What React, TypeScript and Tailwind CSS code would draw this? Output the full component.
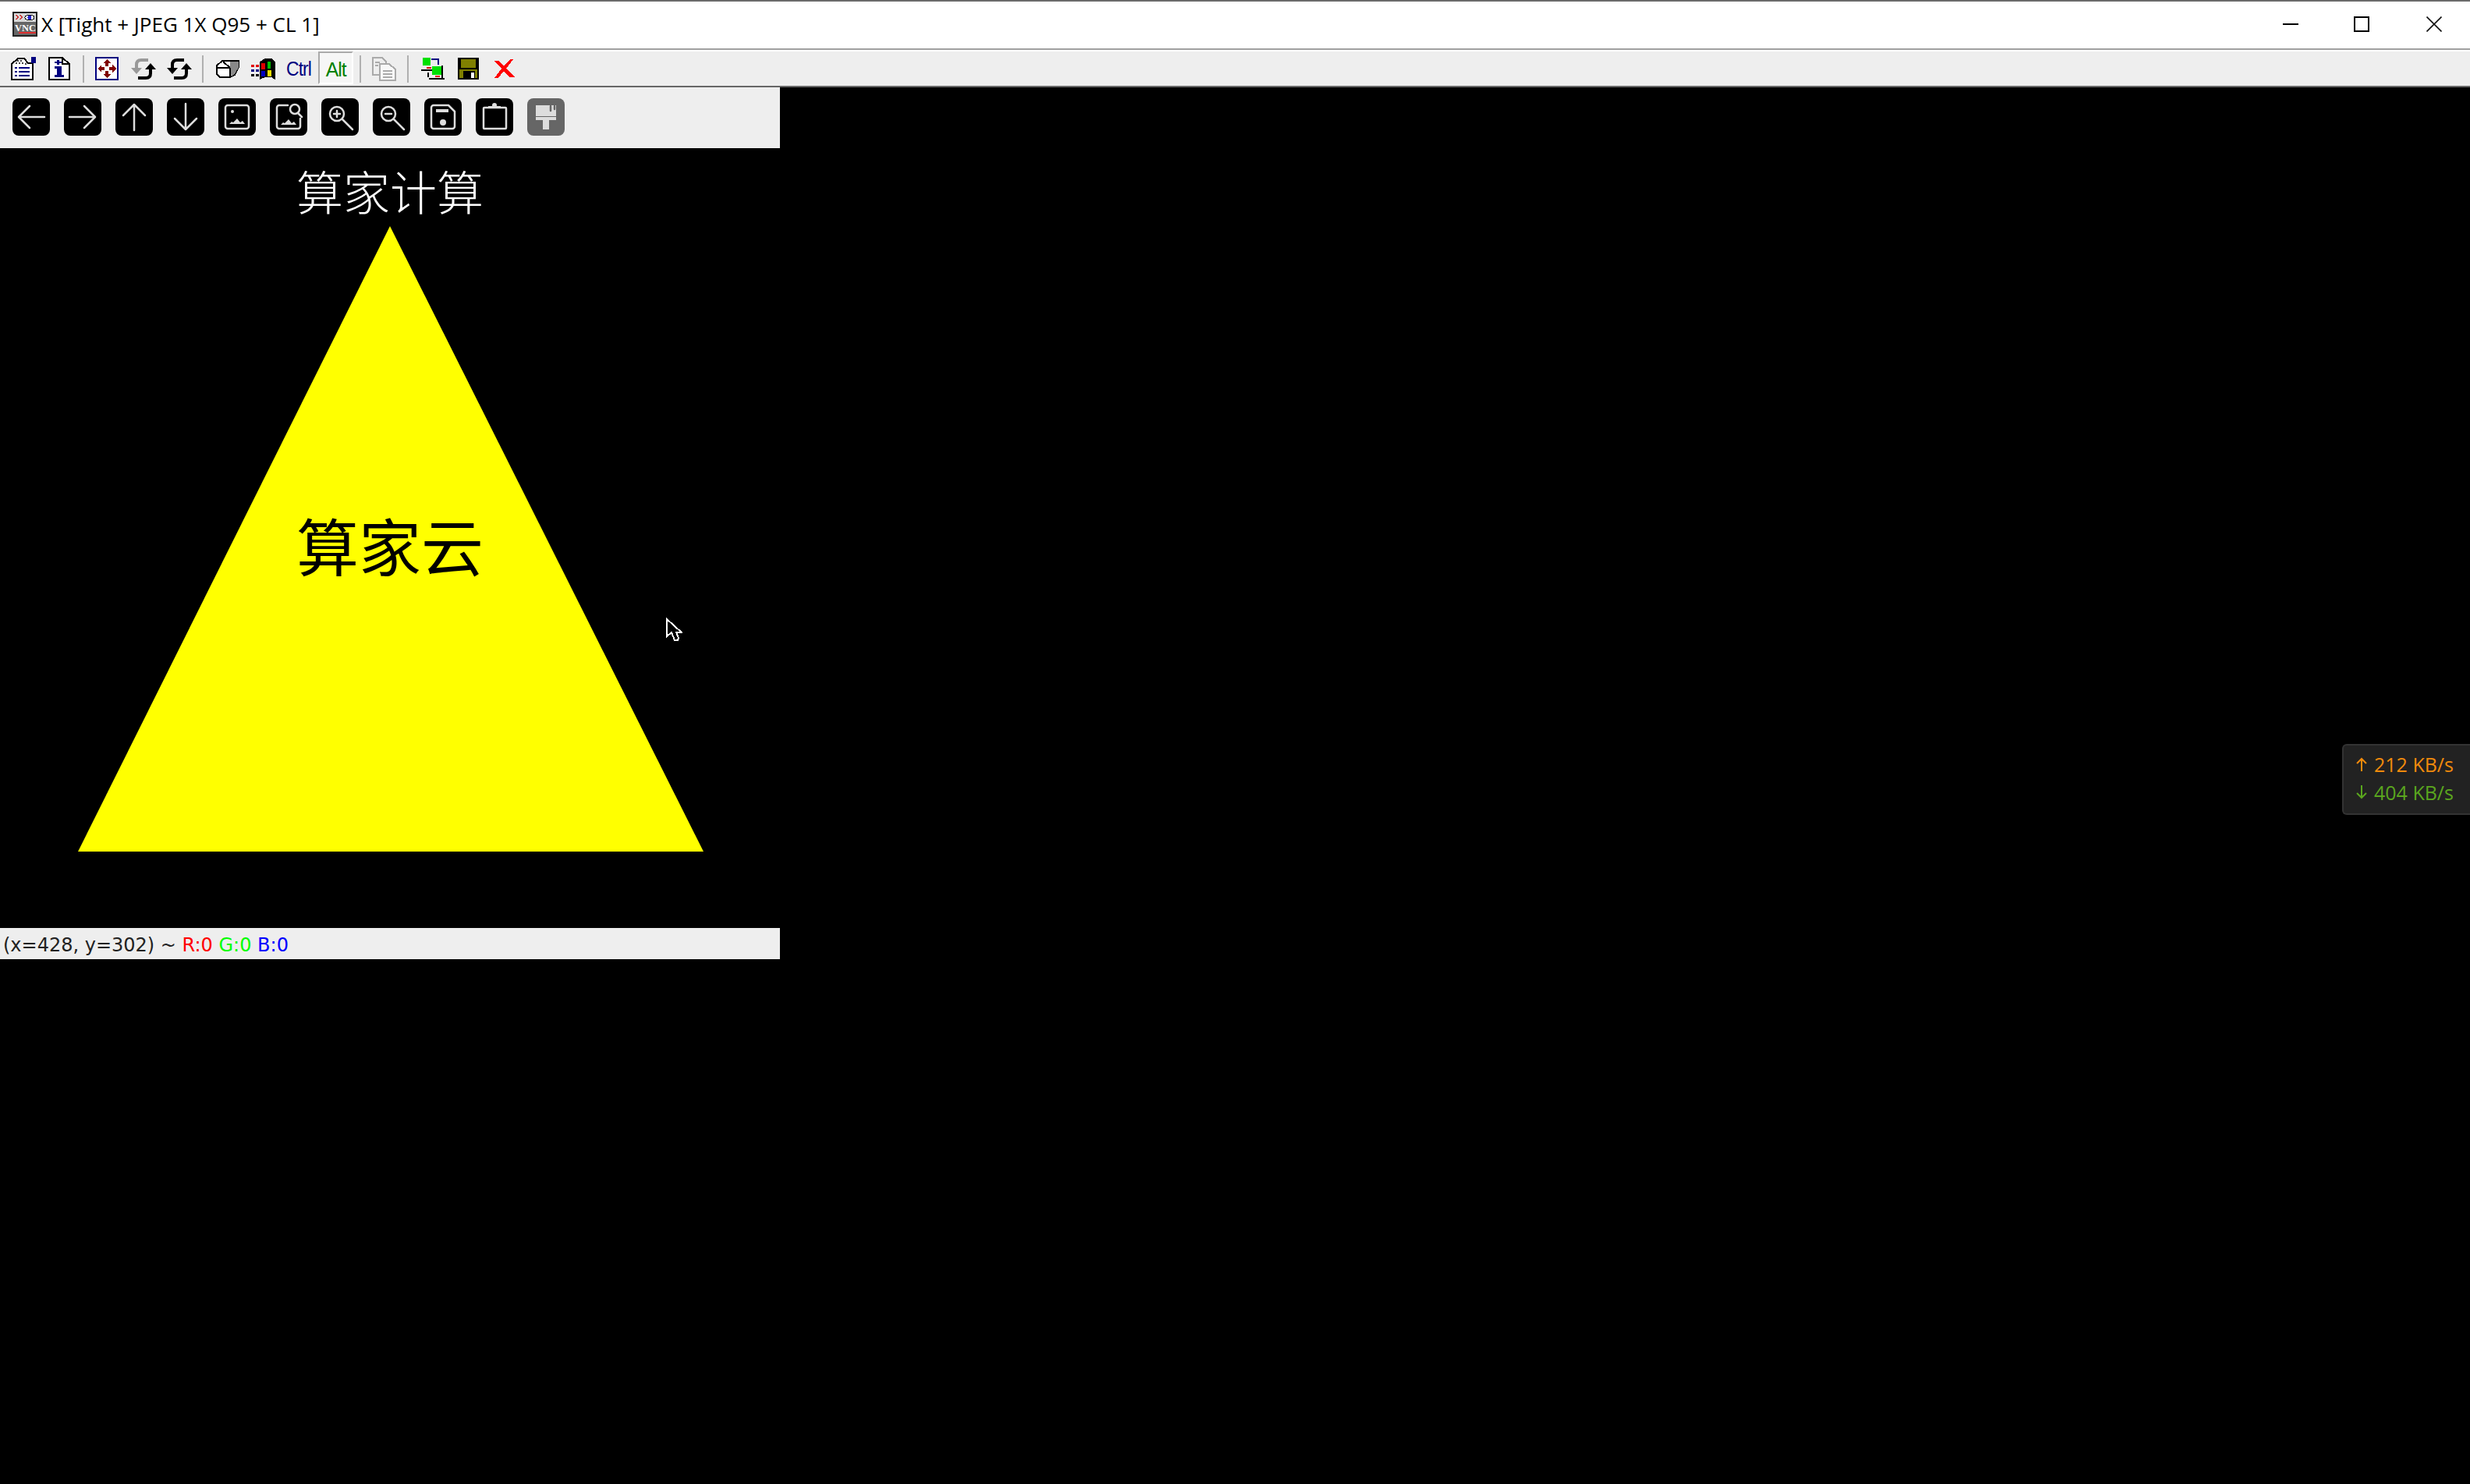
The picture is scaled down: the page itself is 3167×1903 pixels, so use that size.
import { ReactNode } from "react";

const STATUS_FONT = "font-['DejaVu_Sans',sans-serif]";

function IconButton({ children, dim }: { children: ReactNode; dim?: boolean }) {
  return (
    <div className={`flex h-12 w-12 shrink-0 items-center justify-center rounded-lg ${dim ? "bg-[#666]" : "bg-black"}`}>
      <svg width="48" height="48" viewBox="0 0 48 48" fill="none" stroke="#ddd" strokeWidth="2.5" strokeLinecap="round" strokeLinejoin="round">
        {children}
      </svg>
    </div>
  );
}

function Sep({ className }: { className: string }) {
  return <div className={`h-[35px] w-0.5 shrink-0 bg-[#b0b0b0] ${className}`} />;
}

function Pixel({ w, h, className, children }: { w: number; h: number; className: string; children: ReactNode }) {
  return (
    <svg width={w} height={h} viewBox={`0 0 ${w} ${h}`} shapeRendering="crispEdges" className={`shrink-0 ${className}`}>
      {children}
    </svg>
  );
}

function RefreshIcon({ className, first }: { className: string; first: string }) {
  return (
    <svg width="32" height="27" viewBox="0 0 32 27" className={`shrink-0 ${className}`}>
      <path d="M7 14V8Q7 2 13 2H22" fill="none" stroke={first} strokeWidth="4" />
      <polygon points="0,12 14,12 7,20" fill={first} />
      <path d="M25 12V19Q25 25 19 25H9" fill="none" stroke="#000" strokeWidth="4" />
      <polygon points="18,14 32,14 25,6" fill="#000" />
    </svg>
  );
}

function VncLogo() {
  return (
    <svg width="32" height="32" viewBox="0 0 32 32" shapeRendering="crispEdges" className="shrink-0">
      <rect width="32" height="32" fill="#222" />
      <rect x="2" y="2" width="28" height="11" fill="#d8d8d8" />
      <path d="M4 4h2l2 3-2 3H4l2-3zM9 4h2l2 3-2 3H9l2-3z" fill="#c33" />
      <ellipse cx="22" cy="7.5" rx="6" ry="3.5" fill="#fff" stroke="#111" />
      <circle cx="22" cy="7.5" r="2.5" fill="#22c" />
      <rect x="2" y="13" width="28" height="17" fill="#666" />
      <text x="3" y="25" fontFamily="'Liberation Serif',serif" fontWeight="700" fontSize="13" fill="#fff" textLength="27" lengthAdjust="spacingAndGlyphs" shapeRendering="auto">VNC</text>
      <rect x="8" y="26" width="22" height="2" fill="#e03030" />
    </svg>
  );
}

export default function App() {
  return (
    <div className="flex h-[1903px] w-[3167px] flex-col overflow-hidden bg-black">
      {/* window title bar */}
      <div className="flex h-[64px] shrink-0 items-center border-t-2 border-b-2 border-t-[#6b6b6b] border-b-[#a0a0a0] bg-white pb-[2px] pl-4">
        <VncLogo />
        <span className="ml-[5px] font-['Open_Sans',sans-serif] text-[26px] text-black">X [Tight + JPEG 1X Q95 + CL 1]</span>
        <div className="ml-auto flex items-center">
          <svg width="20" height="20" viewBox="0 0 20 20" className="mr-[71px]"><rect y="9" width="20" height="2" fill="#000" /></svg>
          <svg width="20" height="20" viewBox="0 0 20 20" className="mr-[73px]"><rect x="1" y="1" width="18" height="18" fill="none" stroke="#000" strokeWidth="2" /></svg>
          <svg width="20" height="20" viewBox="0 0 20 20" className="mr-[36px]"><path d="M0.5 0.5L19.5 19.5M19.5 0.5L0.5 19.5" stroke="#111" strokeWidth="1.6" /></svg>
        </div>
      </div>

      {/* tool bar */}
      <div className="flex h-[48px] shrink-0 items-center border-t-2 border-b-2 border-t-white border-b-[#666] bg-[#eee] pl-[14px]">
        <Pixel w={32} h={30} className="">
          <path d="M1 9L9 2h8l5 6h6v21H1z" fill="#fff" stroke="#000" strokeWidth="2" />
          <rect x="26" y="0" width="6" height="8" fill="#000080" />
          <path d="M8 4h2v2H8zM12 4h2v2h-2zM6 7h2v2H6zM10 7h2v2h-2zM14 7h2v2h-2zM18 8h2v2h-2z" fill="#444" />
          <path d="M5 13h3v2H5zM10 13h14v2H10zM5 18h3v2H5zM10 18h14v2H10zM5 23h3v2H5zM10 23h14v2H10z" fill="#000080" />
        </Pixel>
        <Pixel w={28} h={30} className="ml-4">
          <path d="M1 1h17l9 8v20H1z" fill="#fff" stroke="#000" strokeWidth="2" />
          <path d="M18 1v8h9" fill="none" stroke="#000" strokeWidth="2" />
          <path d="M11 4h3v2h3v2h-3v2h-3V8H8V6h3z M8 12h9v11h3v3H8v-3h3v-8H8z" fill="#000080" />
        </Pixel>
        <Sep className="ml-4" />
        <Pixel w={30} h={30} className="ml-[14px]">
          <rect x="1" y="1" width="28" height="28" fill="#fff" stroke="#000080" strokeWidth="2" />
          <path d="M15 3l5 5h-3v4h-4V8h-3zM15 27l5-5h-3v-4h-4v4h-3zM3 15l5-5v3h4v4H8v3zM27 15l-5-5v3h-4v4h4v3z" fill="#800000" />
        </Pixel>
        <RefreshIcon className="ml-4" first="#999" />
        <RefreshIcon className="ml-[14px]" first="#000" />
        <Sep className="ml-[13px]" />
        <Pixel w={32} h={24} className="ml-[15px]">
          <path d="M2 8l7-6h21v8l-5 10-6 3H6l-4-4z" fill="#fff" stroke="#000" strokeWidth="2" />
          <path d="M19 3h11v7l-5 9-5 2z" fill="#888" />
          <path d="M2 11h17M10 3l9 8M19 11v11" stroke="#000" strokeWidth="2" fill="none" />
        </Pixel>
        <Pixel w={32} h={28} className="ml-[14px]">
          <path d="M11 5l7-4h8l5 4v23l-5-3h-8l-7 3z" fill="#000" />
          <path d="M13 7h5v8h-5z" fill="#e00000" />
          <path d="M21 5h4v9h-4z" fill="#00c000" />
          <path d="M13 17h5v7h-5z" fill="#0000c0" />
          <path d="M21 16h5v8h-5z" fill="#f0e000" />
          <path d="M0 9h4v3H0zM6 9h4v3H6z" fill="#e00000" />
          <path d="M0 15h4v3H0zM6 15h4v3H6z" fill="#000080" />
          <path d="M0 21h4v3H0zM6 21h4v3H6z" fill="#000" />
        </Pixel>
        <span className="ml-[13px] w-[33px] origin-left font-['Liberation_Sans',sans-serif] text-[26px] leading-none tracking-[-1px] whitespace-nowrap text-[#000080] [transform:scaleX(0.88)]">Ctrl</span>
        <div className="ml-2 flex h-[42px] w-[45px] shrink-0 items-center justify-center self-start border-2 border-t-[#aaa] border-r-white border-b-white border-l-[#aaa] bg-[#f6f6f6] pt-1">
          <span className="font-['Liberation_Sans',sans-serif] text-[26px] leading-none tracking-[-1px] text-[#008000] [transform:scaleX(0.95)]">Alt</span>
        </div>
        <Sep className="ml-2" />
        <Pixel w={32} h={31} className="ml-[14px]">
          <path d="M1 1h12l5 5v17H1z" fill="#eee" stroke="#aaa" strokeWidth="2" />
          <path d="M10 9h12l8 7v14H10z" fill="#f8f8f8" stroke="#aaa" strokeWidth="2" />
          <path d="M14 18h12M14 22h12M14 26h12M4 7h6M4 11h4" stroke="#aaa" strokeWidth="2" />
        </Pixel>
        <Sep className="ml-[13px]" />
        <Pixel w={30} h={28} className="ml-4">
          <rect x="2" y="0" width="10" height="10" fill="#00e000" />
          <path d="M13 1h10v2H13zM21 3h2v6h-2z" fill="#000080" />
          <rect x="0" y="15" width="14" height="2" fill="#000" />
          <rect x="7" y="12" width="6" height="2" fill="#e00000" />
          <rect x="14" y="11" width="12" height="11" fill="#00e000" />
          <path d="M26 10h2v17h-2zM8 19h2v6H8z" fill="#000" />
          <rect x="18" y="23" width="6" height="2" fill="#e00000" />
          <rect x="10" y="26" width="20" height="2" fill="#000" />
        </Pixel>
        <Pixel w={27} h={28} className="ml-[17px]">
          <rect x="0" y="0" width="27" height="28" fill="#000" />
          <rect x="4" y="2" width="19" height="11" fill="#808000" />
          <rect x="2" y="15" width="23" height="11" fill="#808000" />
          <rect x="7" y="17" width="15" height="11" fill="#000" />
          <rect x="17" y="19" width="4" height="7" fill="#fff" />
        </Pixel>
        <Pixel w={26} h={25} className="ml-5">
          <path d="M0 2h5l7 7 8-9h4l-9 12 9 9 2 2h-7l-7-8-7 9H0l9-12z" fill="#f00" />
        </Pixel>
      </div>

      {/* viewer */}
      <div className="relative w-[1000px] flex-1">
        <div className="flex h-[78px] items-start gap-[18px] bg-[#eee] pt-[14px] pl-4">
          <IconButton><path d="M41 24H9M22 10L8 24l14 14" /></IconButton>
          <IconButton><path d="M7 24h32M26 10l14 14-14 14" /></IconButton>
          <IconButton><path d="M24 41V9M10 22L24 8l14 14" /></IconButton>
          <IconButton><path d="M24 7v32M10 26l14 14 14-14" /></IconButton>
          <IconButton>
            <rect x="9" y="9" width="30" height="30" rx="3" />
            <circle cx="18" cy="17" r="2" fill="#ddd" stroke="none" />
            <path d="M14 33h20l-3-4-3 2-4-5-5 5-2-1z" fill="#ddd" stroke="none" />
          </IconButton>
          <IconButton>
            <path d="M23 9H12a3 3 0 0 0-3 3v24a3 3 0 0 0 3 3h24a3 3 0 0 0 3-3V26" />
            <circle cx="32" cy="14" r="6" />
            <path d="M36 19l5 5" />
            <path d="M14 34h20l-3-4-3 2-4-5-5 5-2-1z" fill="#ddd" stroke="none" />
          </IconButton>
          <IconButton>
            <circle cx="20" cy="20" r="9" />
            <path d="M27 27l13 13M20 16v8M16 20h8" />
          </IconButton>
          <IconButton>
            <circle cx="20" cy="20" r="9" />
            <path d="M27 27l13 13M16 20h8" />
          </IconButton>
          <IconButton>
            <path d="M12 9h19l8 8v19a3 3 0 0 1-3 3H12a3 3 0 0 1-3-3V12a3 3 0 0 1 3-3z" />
            <rect x="15" y="14" width="16" height="4" fill="#ddd" stroke="none" />
            <circle cx="24" cy="31" r="4" fill="#ddd" stroke="none" />
          </IconButton>
          <IconButton>
            <rect x="10" y="12" width="29" height="27" rx="1" />
            <circle cx="24" cy="9" r="3" fill="#ddd" stroke="none" />
            <rect x="16" y="10" width="16" height="3" fill="#ddd" stroke="none" />
          </IconButton>
          <IconButton dim>
            <path d="M11 9h26v14H11z" fill="#ddd" stroke="none" />
            <path d="M30 10v6M35 10v4" stroke="#666" />
            <rect x="11" y="24" width="26" height="4" fill="#ddd" stroke="none" />
            <rect x="20" y="28" width="8" height="12" fill="#ddd" stroke="none" />
          </IconButton>
        </div>

        {/* remote desktop canvas */}
        <div className="relative h-[1000px] bg-black">
          <svg width="1000" height="1000" viewBox="0 0 1000 1000" className="absolute top-0 left-0">
            <polygon points="500,100 100,902 902,902" fill="#ff0" />
          </svg>
          <div className="absolute top-[14px] right-0 left-0 text-center font-['Noto_Sans_CJK_SC',sans-serif] text-[60px] leading-[80px] font-light text-white">算家计算</div>
          <div className="absolute top-[452px] right-0 left-0 text-center font-['Noto_Sans_CJK_SC',sans-serif] text-[80px] leading-[110px] font-normal text-black">算家云</div>
          <svg width="22" height="33" viewBox="0 0 22 33" shapeRendering="crispEdges" className="absolute top-[602px] left-[853px]">
            <path d="M2 2v22l6-5 4 10h4l1-3-3-7h7z" fill="#000" stroke="#fff" strokeWidth="2" />
          </svg>
        </div>

        <div className={`flex h-10 items-center bg-[#eee] pt-[3px] pl-1 text-[24px] whitespace-pre ${STATUS_FONT}`}>
          <span className="text-[#222]">(x=428, y=302) ~ </span>
          <span className="text-[#f00]">R:0 </span>
          <span className="text-[#0f0]">G:0 </span>
          <span className="text-[#00f]">B:0</span>
        </div>
      </div>

      {/* network speed overlay */}
      <div className="absolute top-[954px] right-0 flex h-[91px] w-[164px] flex-col justify-center rounded-l-md border-2 border-r-0 border-[#333] bg-[#222] pb-[4px] pl-[16px] font-['Open_Sans',sans-serif] text-[25px] leading-[36px]">
        <div className="flex items-center gap-[9px] text-[#f08a0c]">
          <svg width="14" height="18" viewBox="0 0 14 18" fill="none" stroke="currentColor" strokeWidth="2"><path d="M7 18V2M1 8l6-6 6 6" /></svg>
          <span>212 KB/s</span>
        </div>
        <div className="flex items-center gap-[9px] text-[#5aa61e]">
          <svg width="14" height="18" viewBox="0 0 14 18" fill="none" stroke="currentColor" strokeWidth="2"><path d="M7 0v16M1 10l6 6 6-6" /></svg>
          <span>404 KB/s</span>
        </div>
      </div>
    </div>
  );
}
